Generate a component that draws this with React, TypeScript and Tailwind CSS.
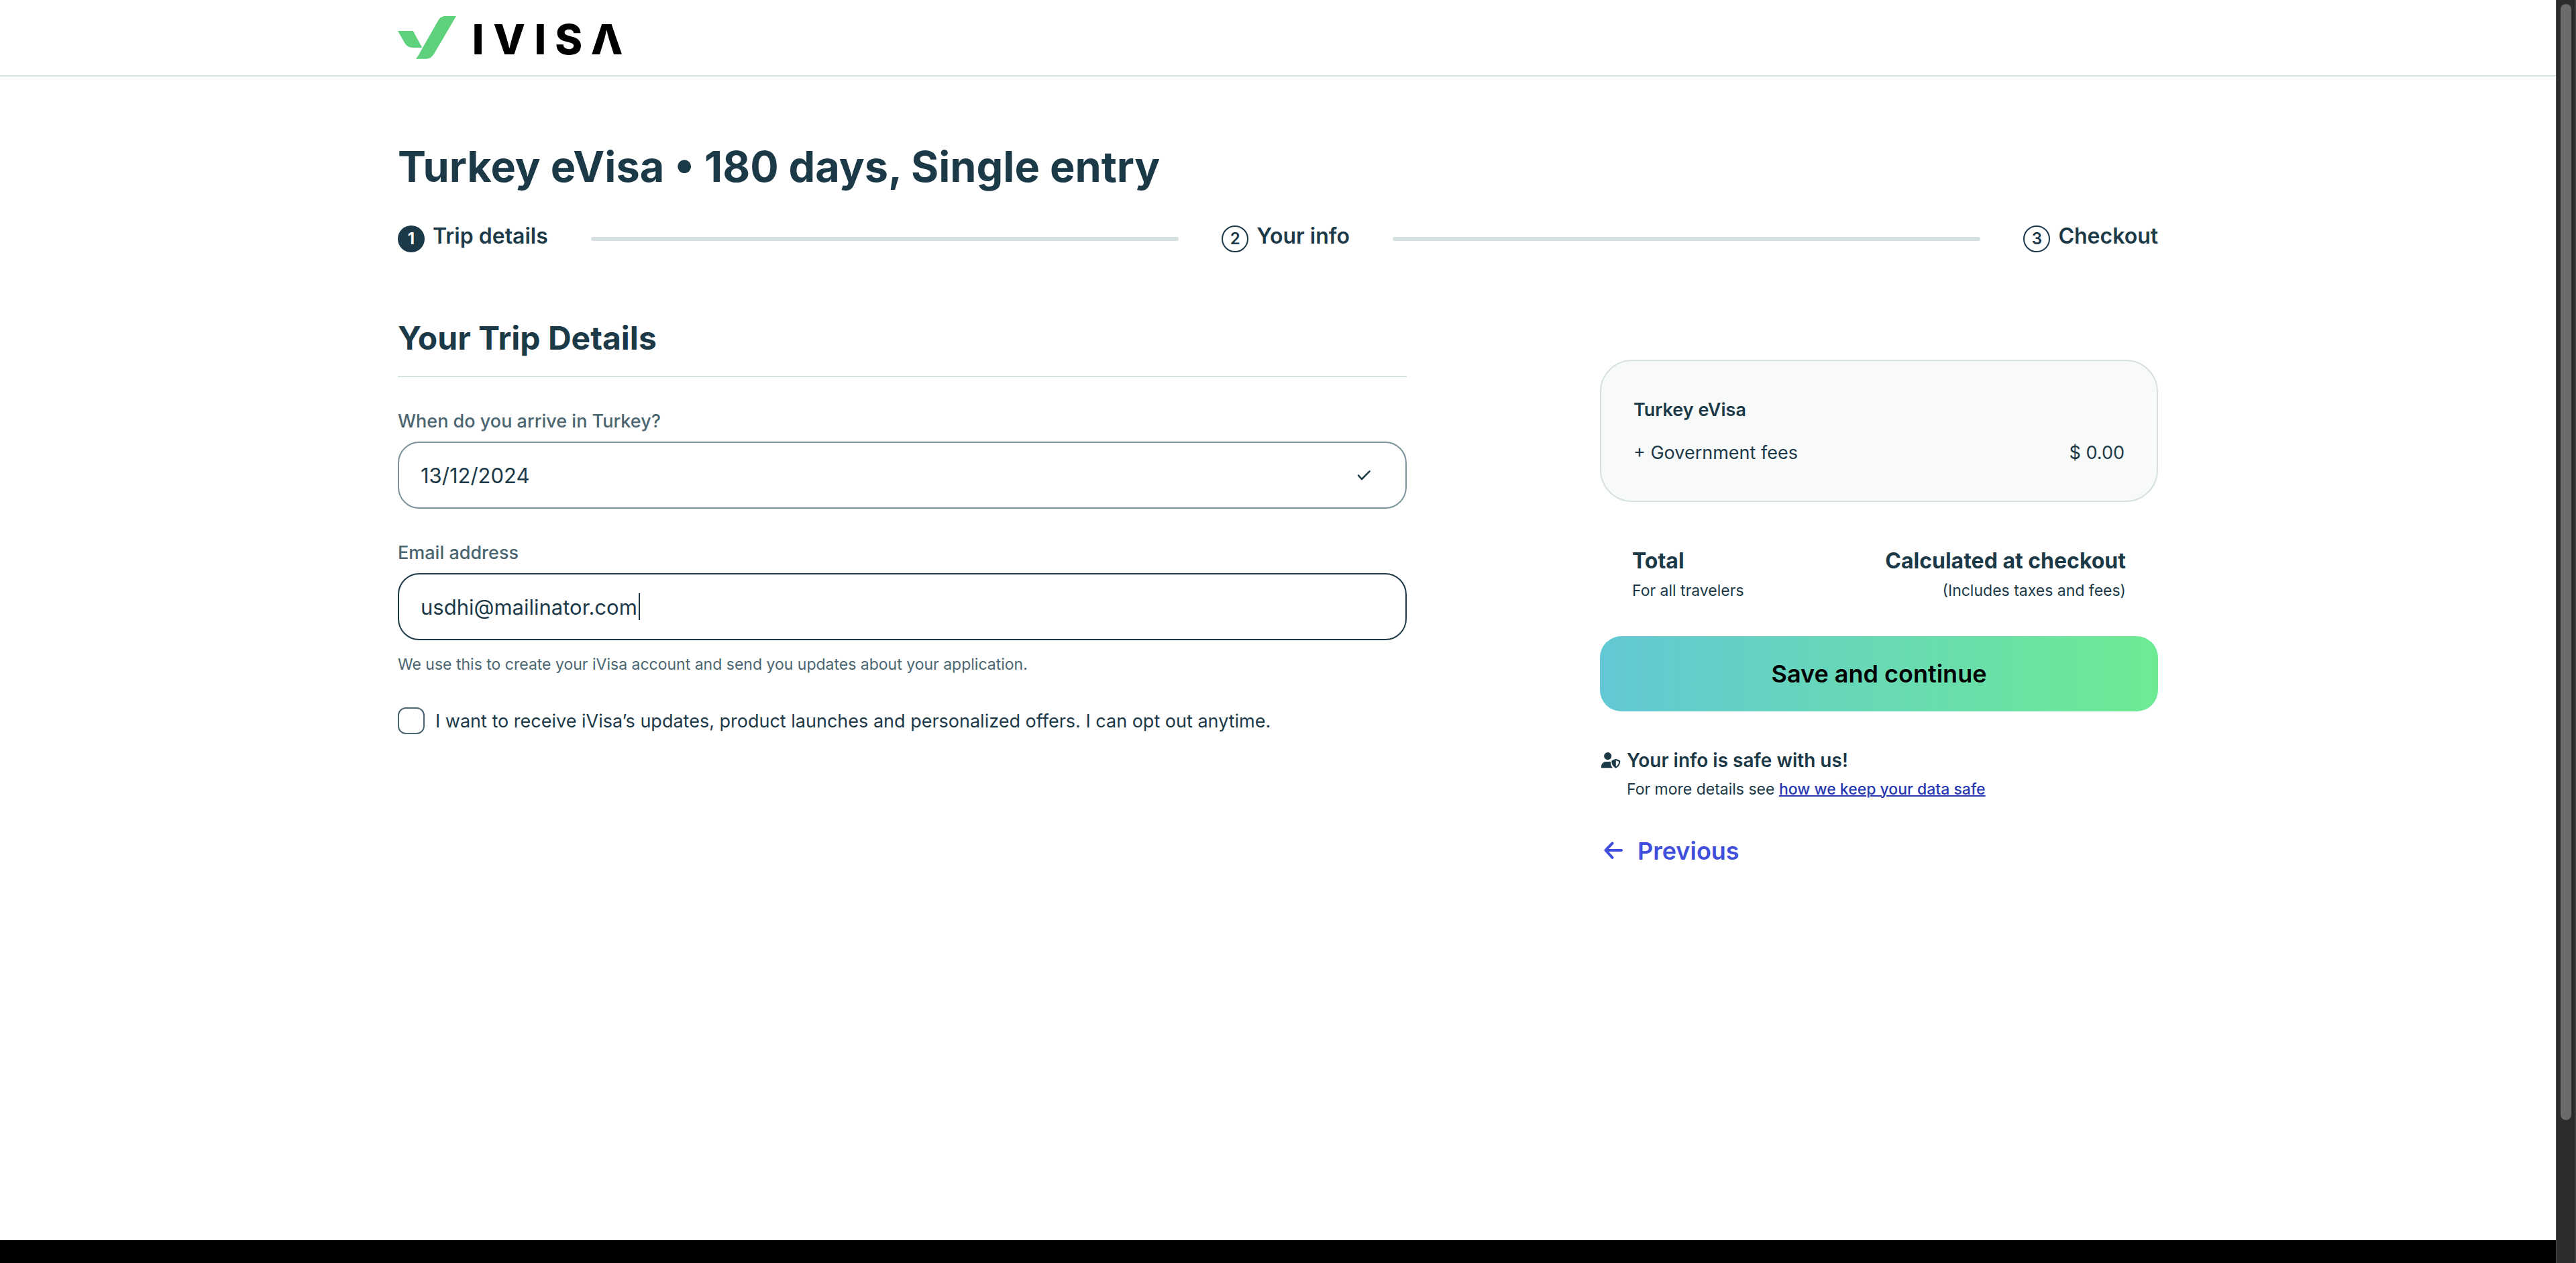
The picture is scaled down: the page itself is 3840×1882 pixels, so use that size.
import React, { useState } from 'react';

const steps = ['Trip details', 'Your info', 'Checkout'];

function Logo() {
  return (
    <svg viewBox="99 72 1011 192" className="h-16 w-[337px] overflow-visible" role="img" aria-label="iVisa">
      <path
        d="M99 138H167L208 213H166C150 213 138 206 130 193ZM360 72H312C297 72 287 79 280 91L199 233C193 244 188 254 179 263H225C241 263 253 254 262 239Z"
        fill="#5fd17c"
      />
      <text
        x="458 597 736 863 1034"
        y="242"
        textAnchor="middle"
        fontSize="186"
        fontWeight="800"
        fill="#000"
        fontFamily='Inter, "Liberation Sans", sans-serif'
      >
        IVISΛ
      </text>
    </svg>
  );
}

function Container({ children }: { children: React.ReactNode }) {
  return <div className="mx-auto w-full max-w-[2688px] px-8">{children}</div>;
}

function Stepper() {
  return (
    <ol className="mt-11 flex h-11 items-end gap-16">
      {steps.map((label, i) => (
        <React.Fragment key={label}>
          {i > 0 && (
            <li aria-hidden="true" className="flex h-10 flex-1 items-center">
              <span className="h-1.5 w-full rounded-full bg-[#d6e0e0]" />
            </li>
          )}
          <li className="flex items-end gap-3">
            <span
              className={
                i === 0
                  ? 'flex size-10 items-center justify-center rounded-full bg-[#1c3948] text-[24px] leading-8 font-bold text-white'
                  : 'flex size-10 items-center justify-center rounded-full border-2 border-[#1c3948] text-[24px] leading-8 font-semibold'
              }
            >
              {i + 1}
            </span>
            <span className="mb-1 text-[32px] leading-10 font-semibold whitespace-nowrap">{label}</span>
          </li>
        </React.Fragment>
      ))}
    </ol>
  );
}

function TripForm() {
  const [date, setDate] = useState('13/12/2024');
  const [email, setEmail] = useState('usdhi@mailinator.com');
  const [optIn, setOptIn] = useState(false);
  return (
    <section>
      <h2 className="border-b-2 border-[#d6e0e0] pb-6 text-[48px] leading-16 font-bold">Your Trip Details</h2>

      <label htmlFor="arrival" className="mt-12 mb-3 block text-[27px] leading-9 font-medium text-[#4b6670]">
        When do you arrive in Turkey?
      </label>
      <div className="relative">
        <input
          id="arrival"
          type="text"
          value={date}
          onChange={(e) => setDate(e.target.value)}
          className="h-25 w-full rounded-4xl border-2 border-[#7b929b] bg-white px-8 text-[31px] outline-none"
        />
        <svg
          viewBox="0 0 24 24"
          className="pointer-events-none absolute top-[38px] right-[52px] size-6"
          fill="none"
          stroke="#1c3948"
          strokeWidth="2.6"
          strokeLinecap="round"
          strokeLinejoin="round"
          aria-hidden="true"
        >
          <path d="M4 12.5 9 18 20.5 6.3" />
        </svg>
      </div>

      <label htmlFor="email" className="mt-12 mb-3 block text-[27px] leading-9 font-medium text-[#4b6670]">
        Email address
      </label>
      <div className="relative">
        <input
          id="email"
          type="email"
          value={email}
          onChange={(e) => setEmail(e.target.value)}
          aria-describedby="email-help"
          className="h-25 w-full rounded-4xl border-2 border-[#1c3948] bg-white px-8 text-[31px] outline-none"
        />
        <span aria-hidden="true" className="pointer-events-none absolute top-[30px] left-[359px] h-10 w-0.5 bg-[#1c3948]" />
      </div>
      <p id="email-help" className="mt-5 text-[23px] leading-8 text-[#4b6670]">
        We use this to create your iVisa account and send you updates about your application.
      </p>

      <div className="mt-12 flex items-start gap-4">
        <input
          id="updates"
          type="checkbox"
          checked={optIn}
          onChange={(e) => setOptIn(e.target.checked)}
          className="size-10 shrink-0 appearance-none rounded-xl border-2 border-[#4b6670] bg-white checked:bg-[#1c3948]"
        />
        <label htmlFor="updates" className="text-[27px] leading-[42px]">
          I want to receive iVisa’s updates, product launches and personalized offers. I can opt out anytime.
        </label>
      </div>
    </section>
  );
}

function Summary() {
  return (
    <aside className="pt-16">
      <div className="rounded-[48px] border-2 border-[#d6e0e0] bg-[#f8faf9] px-12 pt-13 pb-[50px]">
        <h3 className="text-[27px] leading-[42px] font-semibold">Turkey eVisa</h3>
        <div className="mt-[22px] flex justify-between text-[27px] leading-[42px]">
          <span>+ Government fees</span>
          <span>$ 0.00</span>
        </div>
      </div>

      <div className="mt-17 flex justify-between px-12">
        <div>
          <p className="text-[32px] leading-10 font-bold">Total</p>
          <p className="mt-2 text-[23px] leading-8">For all travelers</p>
        </div>
        <div className="text-right">
          <p className="text-[32px] leading-10 font-bold">Calculated at checkout</p>
          <p className="mt-2 text-[23px] leading-8">(Includes taxes and fees)</p>
        </div>
      </div>

      <button
        type="button"
        className="mt-13 h-28 w-full rounded-4xl bg-linear-[to_right,#62c8d5,#6deb93] text-[36px] leading-12 font-semibold text-black"
      >
        Save and continue
      </button>

      <div className="mt-13 flex gap-2">
        <svg viewBox="0 0 32 32" className="mt-[5px] size-8 shrink-0" fill="#1c3948" aria-hidden="true">
          <circle cx="11.7" cy="9.6" r="5.6" />
          <path d="M2 27.2V25.5C2 20.9 5.4 18 9.3 18H14.3C15 18 15.6 18.1 16 18.3V19.2C16 22.4 17.2 25.3 19 27.2Z" />
          <path
            fillRule="evenodd"
            d="M23.8 13.8 29.4 16C30 16.2 30.3 16.7 30.3 17.3C30.3 21.3 28.5 25.4 23.8 27.6C19.1 25.4 17.3 21.3 17.3 17.3C17.3 16.7 17.6 16.2 18.2 16ZM23.8 16.1V25.2C26.9 23.4 28.1 20.6 28.2 17.9Z"
          />
        </svg>
        <div>
          <p className="text-[28px] leading-[42px] font-semibold">Your info is safe with us!</p>
          <p className="mt-1.5 text-[23px] leading-8">
            For more details see{' '}
            <a href="#data-safety" className="font-medium text-[#2838b0] underline decoration-2">
              how we keep your data safe
            </a>
          </p>
        </div>
      </div>

      <button type="button" className="mt-13 flex items-center gap-4 text-[36px] leading-12 font-semibold text-[#3f4fdb]">
        <svg
          viewBox="0 0 40 40"
          className="size-10"
          fill="none"
          stroke="currentColor"
          strokeWidth="4"
          strokeLinecap="round"
          strokeLinejoin="round"
          aria-hidden="true"
        >
          <path d="M32 19H8.5M18.5 8.5 8.5 19 18.5 29.8" />
        </svg>
        Previous
      </button>
    </aside>
  );
}

export default function App() {
  return (
    <div className="flex min-h-screen bg-white font-[Inter,'Liberation_Sans',sans-serif] text-[#1c3948]">
      <div className="flex min-w-0 flex-1 flex-col">
        <header className="border-b-2 border-[#d6e0e0] py-6">
          <Container>
            <a href="#home" className="block w-fit">
              <Logo />
            </a>
          </Container>
        </header>

        <main className="flex-1 pt-[94px]">
          <Container>
            <h1 className="text-[63px] leading-20 font-bold">Turkey eVisa • 180 days, Single entry</h1>
            <Stepper />
            <div className="mt-24 grid grid-cols-[minmax(0,1504fr)_minmax(0,832fr)] gap-72">
              <TripForm />
              <Summary />
            </div>
          </Container>
        </main>

        <footer className="h-[34px] bg-black" />
      </div>

      <div aria-hidden="true" className="flex w-[30px] shrink-0 flex-col items-center border-x-2 border-[#3f3f3f] bg-[#2c2c2c] pt-1.5">
        <div className="w-4 flex-[1663] rounded-full bg-[#6b6b6b]" />
        <div className="flex-[213]" />
      </div>
    </div>
  );
}
